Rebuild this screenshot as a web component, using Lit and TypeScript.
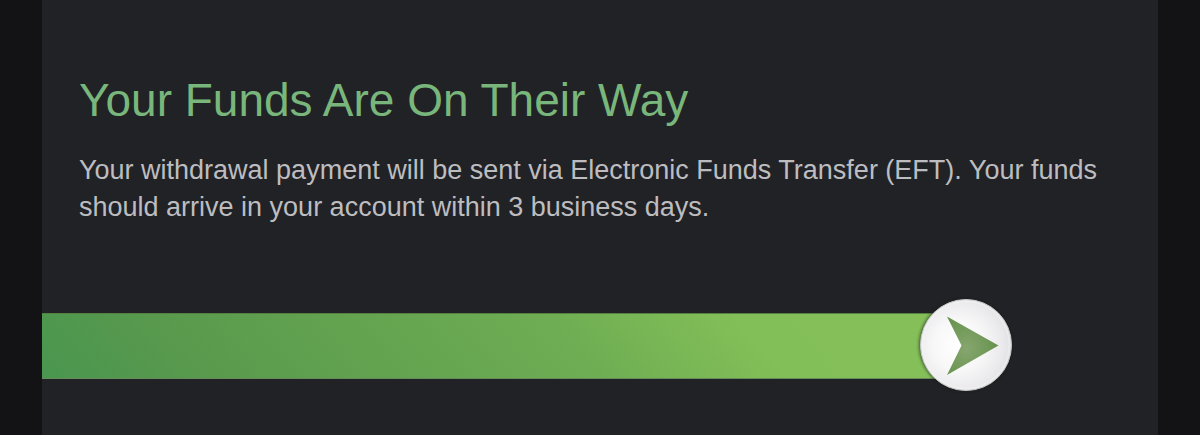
import { LitElement, html, css } from "lit";
import { customElement, property } from "lit/decorators.js";

@customElement("transfer-progress")
class TransferProgress extends LitElement {
  @property({ type: Number }) value = 83;

  static styles = css`
    :host {
      display: block;
    }
    .track {
      display: flex;
      align-items: center;
    }
    .fill {
      box-sizing: border-box;
      height: 66px;
      border-top: 1px solid #55803f;
      border-bottom: 1px solid #658b5b;
      background: linear-gradient(50deg, #4a9650 0%, #58994d 16%, #6fae53 58%, #83bf58 76%, #85bf59 100%);
    }
    .knob {
      display: block;
      flex: none;
      width: 104px;
      height: 104px;
      margin-left: -54px;
    }
  `;

  render() {
    return html`
      <div class="track" role="img" aria-label="Funds in transit">
        <div class="fill" style="width:${this.value}%"></div>
        <svg class="knob" viewBox="0 1 104 104" aria-hidden="true">
          <defs>
            <radialGradient id="face" cx="0.42" cy="0.5" r="0.6">
              <stop offset="0" stop-color="#ffffff" />
              <stop offset="0.45" stop-color="#f8f8f9" />
              <stop offset="0.8" stop-color="#eaeaec" />
              <stop offset="1" stop-color="#dfdfe1" />
            </radialGradient>
            <radialGradient id="arrow" cx="0.38" cy="0.55" r="0.65">
              <stop offset="0" stop-color="#86a66f" />
              <stop offset="1" stop-color="#64914a" />
            </radialGradient>
            <filter id="shade" x="-20%" y="-20%" width="140%" height="140%">
              <feGaussianBlur stdDeviation="1.6" />
            </filter>
          </defs>
          <circle cx="51" cy="52" r="46" fill="#141a12" opacity="0.6" filter="url(#shade)" />
          <circle cx="52" cy="52" r="45.5" fill="url(#face)" stroke="#c4c6c6" stroke-width="1" />
          <circle cx="52" cy="52" r="43.5" fill="none" stroke="#f4f4f5" stroke-width="2" opacity="0.4" />
          <path d="M33 23.5 L84.5 52.5 L33 82 L47.5 52.5 Z" fill="url(#arrow)" />
        </svg>
      </div>
    `;
  }
}

@customElement("app-root")
class AppRoot extends LitElement {
  static styles = css`
    :host {
      display: block;
      min-height: 100vh;
      background: #131315;
      font-family: "Liberation Sans", Arial, Helvetica, sans-serif;
    }
    .panel {
      box-sizing: border-box;
      min-height: 100vh;
      margin: 0 42px;
      padding: 72px 0 36px;
      background: #212226;
    }
    .message {
      padding: 0 37px;
    }
    .title {
      margin: 0;
      font-size: 46px;
      line-height: 56px;
      font-weight: 400;
      color: #79b67b;
    }
    .text {
      margin: 24px 0 0;
      font-size: 27px;
      line-height: 37px;
      color: #bdbdc0;
    }
    .progress {
      margin-top: 68px;
    }
  `;

  render() {
    return html`
      <main class="panel">
        <div class="message">
          <h1 class="title">Your Funds Are On Their Way</h1>
          <p class="text">
            Your withdrawal payment will be sent via Electronic Funds Transfer (EFT). Your funds
            should arrive in your account within 3 business days.
          </p>
        </div>
        <transfer-progress class="progress" .value=${83}></transfer-progress>
      </main>
    `;
  }
}
